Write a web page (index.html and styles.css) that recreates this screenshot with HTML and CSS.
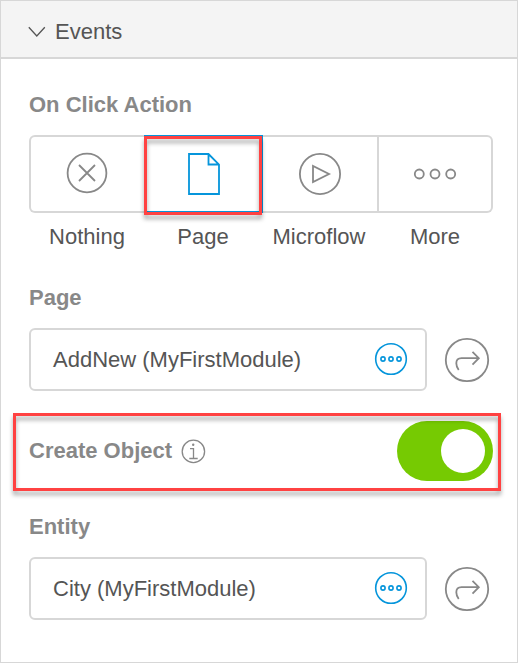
FILE: index.html
```html
<!DOCTYPE html>
<html lang="en">
<head>
<meta charset="utf-8">
<title>Events</title>
<link rel="stylesheet" href="styles.css">
</head>
<body>
<section class="panel">
  <header class="panel-header">
    <svg class="chevron" width="18" height="12" viewBox="0 0 18 12"><path d="M.8 1.2 8.8 10 16.8 1.2"/></svg>
    <span>Events</span>
  </header>
  <div class="panel-body">
    <h2 class="label">On Click Action</h2>
    <div class="segments">
      <button class="segment">
        <svg class="icon" width="44" height="44" viewBox="0 0 44 44"><circle cx="22" cy="22" r="19.4"/><path d="m14 14 16 16M30 14 14 30"/></svg>
      </button>
      <button class="segment selected">
        <svg class="icon" width="44" height="44" viewBox="0 0 44 44"><path d="M8 2H27.5L38 12.5V42H8ZM27.5 2V12.5H38"/></svg>
        <span class="highlight highlight-segment"></span>
      </button>
      <button class="segment">
        <svg class="icon" width="44" height="44" viewBox="0 0 44 44"><circle cx="22" cy="22" r="20.1"/><path d="M15 14V30L31 22Z"/></svg>
      </button>
      <button class="segment divided">
        <svg class="icon" width="44" height="44" viewBox="0 0 44 44"><circle cx="6.3" cy="22" r="4.5"/><circle cx="22" cy="22" r="4.5"/><circle cx="37.7" cy="22" r="4.5"/></svg>
      </button>
    </div>
    <div class="captions"><span>Nothing</span><span>Page</span><span>Microflow</span><span>More</span></div>

    <h2 class="label label-page">Page</h2>
    <div class="field-row">
      <div class="field">
        <span>AddNew (MyFirstModule)</span>
        <svg class="more" width="34" height="34" viewBox="0 0 34 34"><circle cx="17" cy="17" r="15.3"/><circle cx="9" cy="17" r="2.1"/><circle cx="17" cy="17" r="2.1"/><circle cx="25" cy="17" r="2.1"/></svg>
      </div>
      <svg class="goto" width="46" height="46" viewBox="0 0 46 46"><circle cx="23" cy="23" r="21.2"/><path d="M14.7 33Q12.3 30 12.3 26.3 12.3 21.2 17.5 21.2H34.5M28.5 14.8 34.8 21.2 28.5 27.6"/></svg>
    </div>

    <div class="toggle-row">
      <h2 class="label">Create Object</h2>
      <svg class="info" width="26" height="26" viewBox="0 0 26 26"><circle cx="13.4" cy="13.4" r="11.2"/><path d="M10 10.7H13.5V20.5M9.3 20.5H17.7"/><circle class="dot" cx="13.2" cy="6.8" r="1.2"/></svg>
      <span class="toggle"><span class="knob"></span></span>
      <span class="highlight highlight-row"></span>
    </div>

    <h2 class="label label-entity">Entity</h2>
    <div class="field-row">
      <div class="field">
        <span>City (MyFirstModule)</span>
        <svg class="more" width="34" height="34" viewBox="0 0 34 34"><circle cx="17" cy="17" r="15.3"/><circle cx="9" cy="17" r="2.1"/><circle cx="17" cy="17" r="2.1"/><circle cx="25" cy="17" r="2.1"/></svg>
      </div>
      <svg class="goto" width="46" height="46" viewBox="0 0 46 46"><circle cx="23" cy="23" r="21.2"/><path d="M14.7 33Q12.3 30 12.3 26.3 12.3 21.2 17.5 21.2H34.5M28.5 14.8 34.8 21.2 28.5 27.6"/></svg>
    </div>
  </div>
</section>
</body>
</html>
```

FILE: styles.css
```css
* { box-sizing: border-box; }
body {
  margin: 0;
  background: #fff;
  color: #555;
  font: 22px/26px "Liberation Sans", Arial, sans-serif;
}
svg {
  display: block;
  flex: none;
  fill: none;
  stroke: #888;
  stroke-width: 1.8;
}
.panel {
  width: 518px;
  height: 663px;
  border: 1px solid #d7d7d7;
}
.panel-header {
  display: flex;
  align-items: center;
  gap: 9px;
  height: 58px;
  padding: 5px 0 0 27px;
  border-bottom: 2px solid #d7d7d7;
  background: #f4f4f4;
}
.chevron {
  stroke: #555;
  stroke-width: 1.3;
}
.panel-body { padding: 33px 24px 0 28px; }
.label {
  margin: 0;
  color: #888;
  font-size: 22px;
  line-height: 26px;
  font-weight: bold;
}
.segments {
  display: grid;
  grid-template-columns: 115px 119px 114px 116px;
  height: 78px;
  margin-top: 17px;
  box-shadow: inset 0 0 0 2px #d7d7d7;
  border-radius: 6px;
}
.segment {
  position: relative;
  display: flex;
  align-items: center;
  justify-content: center;
  padding: 0;
  border: 0;
  background: none;
}
.segment:first-child { padding: 0 0 2px 1px; }
.segment.divided { border-left: 2px solid #d7d7d7; padding-right: 2px; }
.segment.selected {
  padding-right: 1px;
  box-shadow: inset 0 0 0 2px #0595db;
}
.selected .icon { stroke: #0595db; }
.captions {
  display: grid;
  grid-template-columns: repeat(4, 116px);
  margin-top: 11px;
  text-align: center;
}
.label-page { margin-top: 35px; }
.field-row {
  display: flex;
  align-items: center;
  gap: 17px;
  margin-top: 17px;
}
.field {
  display: flex;
  align-items: center;
  justify-content: space-between;
  width: 398px;
  height: 63px;
  padding: 0 17px 0 22px;
  border: 2px solid #d7d7d7;
  border-radius: 6px;
}
.more { margin-bottom: 2px; stroke: #0595db; stroke-width: 1.6; }
.toggle-row {
  position: relative;
  display: flex;
  align-items: center;
  height: 60px;
  margin-top: 30px;
}
.info { margin-left: 8px; stroke-width: 1.3; }
.info .dot { fill: #888; stroke: none; }
.toggle {
  display: flex;
  align-items: center;
  justify-content: flex-end;
  width: 96px;
  height: 60px;
  margin-left: auto;
  padding-right: 8px;
  border-radius: 30px;
  background: #76ca02;
}
.knob {
  width: 44px;
  height: 44px;
  border-radius: 50%;
  background: #fff;
}
.label-entity { margin-top: 33px; }
.highlight {
  position: absolute;
  border: 3px solid #ff4242;
  filter: drop-shadow(0 4px 2px rgba(0, 0, 0, .35));
}
.highlight-segment { left: 0; top: 1px; width: 118px; height: 79px; }
.highlight-row { left: -16px; top: -8px; width: 488px; height: 78px; }
```
